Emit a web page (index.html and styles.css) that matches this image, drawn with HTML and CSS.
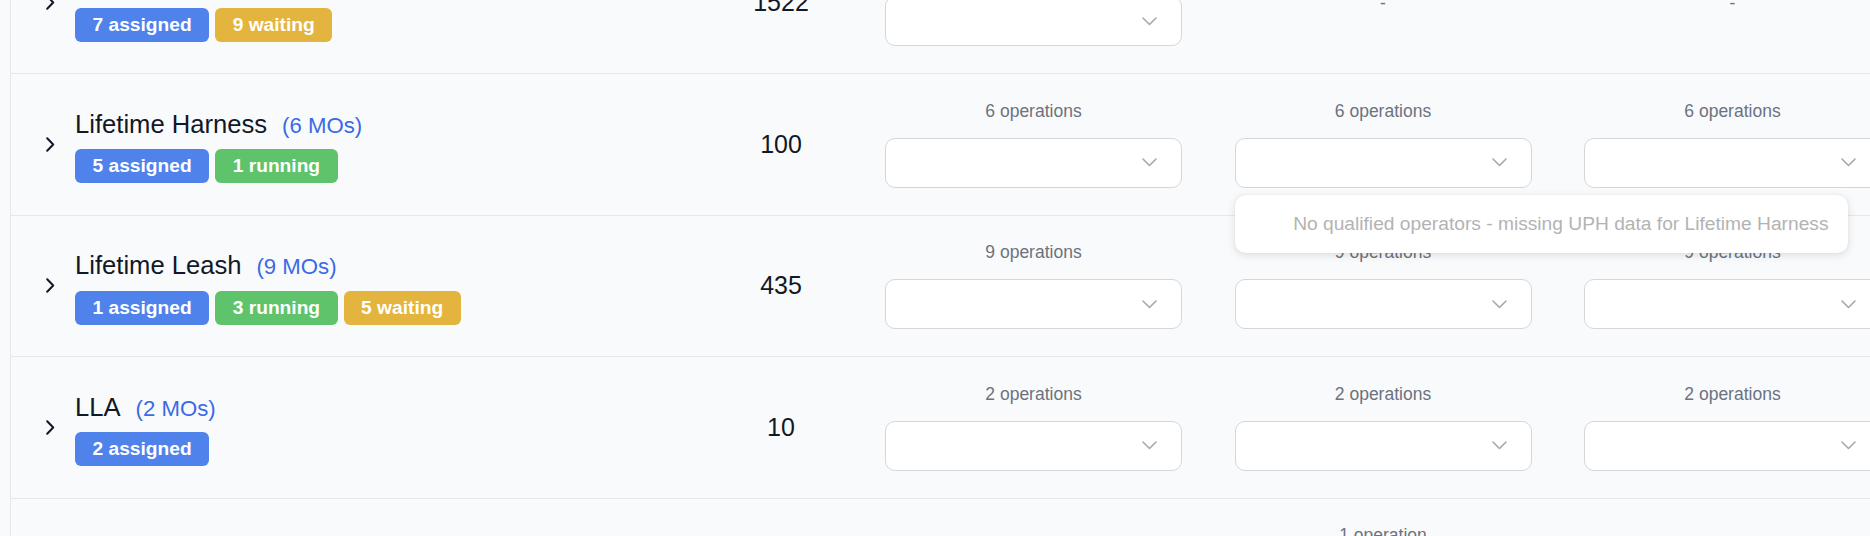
FILE: index.html
```html
<!DOCTYPE html>
<html lang="en">
<head>
<meta charset="utf-8">
<title>Production planning</title>
<link rel="stylesheet" href="styles.css">
</head>
<body>
<div class="list">
  <div class="row">
    <div class="expander"><svg class="chev-right" width="9" height="15" viewBox="0 0 9 15"><path d="M1.2 1.2 L7.2 7.5 L1.2 13.8"/></svg></div>
    <div class="product">
      <div class="title"><span class="name">Lifetime Collar</span><span class="mos">(16 MOs)</span></div>
      <div class="badges"><span class="badge assigned">7 assigned</span><span class="badge waiting">9 waiting</span></div>
    </div>
    <div class="qty">1522</div>
    <div class="op">
      <div class="op-label">16 operations</div>
      <div class="select"><svg class="chev-down" width="15" height="9" viewBox="0 0 15 9"><path d="M1 1 L7.5 7.5 L14 1"/></svg></div>
    </div>
    <div class="op"><span class="dash">-</span></div>
    <div class="op"><span class="dash">-</span></div>
  </div>

  <div class="row">
    <div class="expander"><svg class="chev-right" width="9" height="15" viewBox="0 0 9 15"><path d="M1.2 1.2 L7.2 7.5 L1.2 13.8"/></svg></div>
    <div class="product">
      <div class="title"><span class="name">Lifetime Harness</span><span class="mos">(6 MOs)</span></div>
      <div class="badges"><span class="badge assigned">5 assigned</span><span class="badge running">1 running</span></div>
    </div>
    <div class="qty">100</div>
    <div class="op">
      <div class="op-label">6 operations</div>
      <div class="select"><svg class="chev-down" width="15" height="9" viewBox="0 0 15 9"><path d="M1 1 L7.5 7.5 L14 1"/></svg></div>
    </div>
    <div class="op">
      <div class="op-label">6 operations</div>
      <div class="select"><svg class="chev-down" width="15" height="9" viewBox="0 0 15 9"><path d="M1 1 L7.5 7.5 L14 1"/></svg>
        <div class="menu">No qualified operators - missing UPH data for Lifetime Harness</div>
      </div>
    </div>
    <div class="op">
      <div class="op-label">6 operations</div>
      <div class="select"><svg class="chev-down" width="15" height="9" viewBox="0 0 15 9"><path d="M1 1 L7.5 7.5 L14 1"/></svg></div>
    </div>
  </div>

  <div class="row">
    <div class="expander"><svg class="chev-right" width="9" height="15" viewBox="0 0 9 15"><path d="M1.2 1.2 L7.2 7.5 L1.2 13.8"/></svg></div>
    <div class="product">
      <div class="title"><span class="name">Lifetime Leash</span><span class="mos">(9 MOs)</span></div>
      <div class="badges"><span class="badge assigned">1 assigned</span><span class="badge running">3 running</span><span class="badge waiting">5 waiting</span></div>
    </div>
    <div class="qty">435</div>
    <div class="op">
      <div class="op-label">9 operations</div>
      <div class="select"><svg class="chev-down" width="15" height="9" viewBox="0 0 15 9"><path d="M1 1 L7.5 7.5 L14 1"/></svg></div>
    </div>
    <div class="op">
      <div class="op-label">9 operations</div>
      <div class="select"><svg class="chev-down" width="15" height="9" viewBox="0 0 15 9"><path d="M1 1 L7.5 7.5 L14 1"/></svg></div>
    </div>
    <div class="op">
      <div class="op-label">9 operations</div>
      <div class="select"><svg class="chev-down" width="15" height="9" viewBox="0 0 15 9"><path d="M1 1 L7.5 7.5 L14 1"/></svg></div>
    </div>
  </div>

  <div class="row">
    <div class="expander"><svg class="chev-right" width="9" height="15" viewBox="0 0 9 15"><path d="M1.2 1.2 L7.2 7.5 L1.2 13.8"/></svg></div>
    <div class="product">
      <div class="title"><span class="name">LLA</span><span class="mos">(2 MOs)</span></div>
      <div class="badges"><span class="badge assigned">2 assigned</span></div>
    </div>
    <div class="qty">10</div>
    <div class="op">
      <div class="op-label">2 operations</div>
      <div class="select"><svg class="chev-down" width="15" height="9" viewBox="0 0 15 9"><path d="M1 1 L7.5 7.5 L14 1"/></svg></div>
    </div>
    <div class="op">
      <div class="op-label">2 operations</div>
      <div class="select"><svg class="chev-down" width="15" height="9" viewBox="0 0 15 9"><path d="M1 1 L7.5 7.5 L14 1"/></svg></div>
    </div>
    <div class="op">
      <div class="op-label">2 operations</div>
      <div class="select"><svg class="chev-down" width="15" height="9" viewBox="0 0 15 9"><path d="M1 1 L7.5 7.5 L14 1"/></svg></div>
    </div>
  </div>

  <div class="row">
    <div class="expander"><svg class="chev-right" width="9" height="15" viewBox="0 0 9 15"><path d="M1.2 1.2 L7.2 7.5 L1.2 13.8"/></svg></div>
    <div class="product">
      <div class="title"><span class="name">LLA Tag</span><span class="mos">(1 MO)</span></div>
      <div class="badges"><span class="badge assigned">1 assigned</span></div>
    </div>
    <div class="qty">25</div>
    <div class="op"><span class="dash">-</span></div>
    <div class="op">
      <div class="op-label">1 operation</div>
      <div class="select"><svg class="chev-down" width="15" height="9" viewBox="0 0 15 9"><path d="M1 1 L7.5 7.5 L14 1"/></svg></div>
    </div>
    <div class="op"><span class="dash">-</span></div>
  </div>
</div>
</body>
</html>
```

FILE: styles.css
```css
html, body {
  margin: 0;
  padding: 0;
}

body {
  width: 1870px;
  height: 536px;
  overflow: hidden;
  background: #f9fafb;
  font-family: "Liberation Sans", Arial, sans-serif;
  color: #111827;
}

.list {
  margin-left: 10px;
  margin-top: -67.5px;
  border-left: 1px solid #e5e7eb;
  width: 1920px;
}

.row {
  display: grid;
  grid-template-columns: 64px 628.25px 155.5px 349.5px 349.5px 349.5px;
  height: 140.5px;
  align-items: center;
  border-bottom: 1px solid #e5e7eb;
}

.expander {
  display: flex;
  align-items: center;
  padding-left: 35px;
}

.chev-right path {
  fill: none;
  stroke: #111827;
  stroke-width: 2;
  stroke-linecap: round;
  stroke-linejoin: round;
}

.product {
  display: flex;
  flex-direction: column;
  align-items: flex-start;
}

.title {
  height: 37.5px;
  line-height: 37.5px;
  margin-bottom: 6px;
  white-space: nowrap;
}

.name {
  font-size: 25.6px;
  color: #111827;
}

.mos {
  font-size: 22.2px;
  line-height: 1;
  margin-left: 15px;
  color: #3b6ae6;
}

.badges {
  display: flex;
  gap: 6px;
}

.badge {
  font-size: 19.2px;
  font-weight: bold;
  line-height: 22px;
  padding: 6px 17.5px;
  border-radius: 6px;
  color: #ffffff;
  white-space: nowrap;
}

.badge.assigned { background: #5082ec; }
.badge.running { background: #5ec36b; }
.badge.waiting { background: #e4b53e; }

.qty {
  font-size: 25px;
  text-align: center;
  color: #111827;
}

.op {
  display: flex;
  flex-direction: column;
  align-items: center;
  justify-content: center;
}

.op-label {
  font-size: 17.5px;
  line-height: 20px;
  margin-bottom: 17px;
  color: #6b7280;
  white-space: nowrap;
}

.dash {
  font-size: 17.5px;
  line-height: 20px;
  color: #6b7280;
}

.select {
  position: relative;
  box-sizing: border-box;
  width: 297px;
  height: 50px;
  background: #ffffff;
  border: 1px solid #d4d6db;
  border-radius: 10px;
  display: flex;
  align-items: center;
  justify-content: flex-end;
  padding-right: 24px;
}

.chev-down path {
  fill: none;
  stroke: #a8a8a8;
  stroke-width: 1.6;
  stroke-linecap: round;
  stroke-linejoin: round;
}

.menu {
  position: absolute;
  z-index: 10;
  top: calc(100% + 8px);
  left: -1px;
  box-sizing: border-box;
  width: 613px;
  height: 58px;
  padding-right: 19px;
  background: #ffffff;
  border-radius: 10px;
  box-shadow: 0 2px 8px rgba(0, 0, 0, 0.12), 0 0 1px rgba(0, 0, 0, 0.15);
  font-size: 19.2px;
  line-height: 58px;
  text-align: right;
  color: #b3b3b3;
  white-space: nowrap;
}
```
